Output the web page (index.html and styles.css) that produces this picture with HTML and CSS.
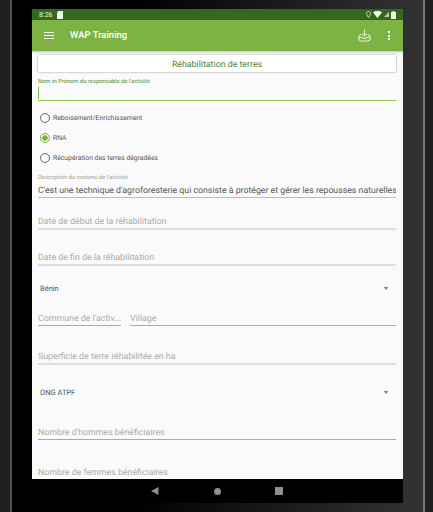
FILE: index.html
```html
<!DOCTYPE html>
<html lang="fr">
<head>
  <meta charset="UTF-8">
  <meta name="viewport" content="width=device-width, initial-scale=1.0">
  <title>WAP Training</title>
  <link rel="stylesheet" href="styles.css">
</head>
<body>
  <div class="tablet">
    <div class="screen">
      <div class="status-bar">
        <div class="status-left">
          <span class="clock">8:26</span>
          <svg class="sd-icon" width="6" height="8" viewBox="0 0 6 8"><path d="M1.500 0H6V8H0V1.500Z" fill="#f1f5ec"/></svg>
        </div>
        <div class="status-right">
          <svg class="pin-icon" width="5" height="7" viewBox="0 0 5 7"><path d="M2.500 .5C1.200 .5.5 1.400.5 2.500.5 3.800 2.500 6.500 2.500 6.500S4.500 3.800 4.500 2.500C4.500 1.400 3.800 .5 2.500 .5Z" fill="none" stroke="#dfe8d6" stroke-width=".9"/></svg>
          <svg width="9" height="7" viewBox="0 0 9 7"><path d="M0 1.200C2.600-.4 6.400-.4 9 1.200L4.500 7Z" fill="#fff"/></svg>
          <svg width="5" height="5" viewBox="0 0 5 5"><path d="M5 0V5H0Z" fill="#b9c9a9"/></svg>
          <svg class="battery-icon" width="5" height="8" viewBox="0 0 5 8"><path d="M1.500 0H3.500V1H5V8H0V1H1.500Z" fill="#f1f5ec"/></svg>
        </div>
      </div>
      <header class="app-bar">
        <div class="menu-icon"><span></span><span></span><span></span></div>
        <div class="app-title">WAP Training</div>
        <svg class="sync-icon" width="13" height="13" viewBox="0 0 14 14" fill="none" stroke="#e4f0d6" stroke-width="1.100">
          <path d="M7 .5V7M4.800 5 7 7.300 9.200 5"/>
          <path d="M3.500 5.500C1.500 6.500.7 8 .7 9.500.7 12 2 13 4 13H10C12 13 13.300 12 13.300 9.500 13.300 8 12.500 6.500 10.500 5.500"/>
          <path d="M1 9H4.500L5.500 10H8.500L9.500 9H13"/>
        </svg>
        <div class="more-icon"><span></span><span></span><span></span></div>
      </header>
      <main class="form">
        <div class="section-title">Réhabilitation de terres</div>

        <div class="field field-active">
          <label class="small-label label-green">Nom et Prénom du responsable de l'activité</label>
          <div class="input-line"><span class="caret"></span></div>
        </div>

        <div class="radio-group">
          <div class="radio-row"><span class="radio"></span>Reboisement/Enrichissement</div>
          <div class="radio-row"><span class="radio radio-on"></span>RNA</div>
          <div class="radio-row"><span class="radio"></span>Récupération des terres dégradées</div>
        </div>

        <div class="field field-desc">
          <label class="small-label">Description du contenu de l'activité</label>
          <div class="input-line value">C'est une technique d'agroforesterie qui consiste à protéger et gérer les repousses naturelles</div>
        </div>

        <div class="field field-date-start"><div class="input-line hint thick">Date de début de la réhabilitation</div></div>
        <div class="field field-date-end"><div class="input-line hint thick">Date de fin de la réhabilitation</div></div>

        <div class="select select-country"><span>Bénin</span><span class="arrow"></span></div>

        <div class="field-row">
          <div class="input-line hint dark-line commune">Commune de l'activ...</div>
          <div class="input-line hint dark-line village">Village</div>
        </div>

        <div class="field field-area"><div class="input-line hint thick">Superficie de terre réhabilitée en ha</div></div>

        <div class="select select-ong"><span>ONG ATPF</span><span class="arrow"></span></div>

        <div class="field field-men"><div class="input-line hint dark-line">Nombre d'hommes bénéficiaires</div></div>
        <div class="field field-women"><div class="input-line hint">Nombre de femmes bénéficiaires</div></div>
      </main>
      <nav class="nav-bar">
        <svg class="nav-back" width="8" height="8" viewBox="0 0 8 8"><path d="M7.500 0V8L0 4Z" fill="#8f8f8f"/></svg>
        <span class="nav-home"></span>
        <span class="nav-square"></span>
      </nav>
    </div>
  </div>
</body>
</html>
```

FILE: styles.css
```css
html, body {
  margin: 0;
  padding: 0;
}
body {
  width: 433px;
  height: 512px;
  overflow: hidden;
  background-color: #1f1f1f;
  font-family: Roboto, 'Liberation Sans', sans-serif;
  text-rendering: geometricPrecision;
}
.tablet {
  box-sizing: border-box;
  width: 415px;
  height: 512px;
  margin-left: 10px;
  padding: 9px 20px 0 20px;
  background: linear-gradient(to right, #000 0, #000 120px, #2c2c2c 370px, #333 100%);
  border-left: 2px solid #4a505a;
  border-right: 2px solid #77797c;
}
.screen {
  width: 371px;
  height: 494px;
  display: flex;
  flex-direction: column;
  background-color: #fafafa;
}

/* status bar */
.status-bar {
  height: 11px;
  flex: none;
  display: flex;
  justify-content: space-between;
  align-items: center;
  padding: 0 7px;
  background-color: #33691e;
}
.status-left, .status-right {
  display: flex;
  align-items: center;
}
.status-left {
  gap: 4px;
}
.status-right {
  gap: 2px;
}
.clock {
  font-size: 7px;
  color: #f1f5ec;
}

/* app bar */
.app-bar {
  height: 31px;
  flex: none;
  display: flex;
  align-items: center;
  background-color: #7cb342;
  box-shadow: 0 1px 2px rgba(0, 0, 0, 0.25);
  z-index: 1;
}
.menu-icon {
  width: 10px;
  margin-left: 12px;
  display: flex;
  flex-direction: column;
  gap: 2px;
}
.menu-icon span {
  height: 1px;
  background-color: #fff;
}
.app-title {
  margin-left: 16px;
  flex: 1;
  font-size: 9.500px;
  font-weight: 500;
  color: #fff;
}
.sync-icon {
  margin-right: 17px;
}
.more-icon {
  margin-right: 13px;
  display: flex;
  flex-direction: column;
  gap: 1.500px;
}
.more-icon span {
  width: 2px;
  height: 2px;
  background-color: #fff;
}

/* form */
.form {
  flex: 1;
  min-height: 0;
  overflow: hidden;
  padding: 4px 7px 0 6px;
}
.section-title {
  height: 17px;
  line-height: 20px;
  text-align: center;
  font-size: 8.800px;
  color: #4f7f3a;
  background-color: #fff;
  box-shadow: 0 0 2px rgba(0, 0, 0, 0.4);
}
.small-label {
  display: block;
  font-size: 5.800px;
  line-height: 7px;
  color: #9e9e9e;
}
.label-green {
  color: #558b2f;
}
.field-active {
  margin-top: 7px;
}
.field-active .input-line {
  height: 15px;
  border-bottom: 1px solid #8bc34a;
}
.caret {
  display: block;
  width: 1px;
  height: 12px;
  margin-top: 1px;
  background-color: #7cb342;
}
.input-line {
  box-sizing: border-box;
  font-size: 8.800px;
  white-space: nowrap;
  overflow: hidden;
  border-bottom: 1px solid #bdbdbd;
}
.value {
  height: 16px;
  padding-top: 3px;
  line-height: 12px;
  font-size: 8.760px;
  color: #555;
}
.hint {
  height: 14px;
  line-height: 14px;
  color: #aaa;
}
.thick {
  border-bottom: 2px solid #dedede;
  height: 15px;
}
.dark-line {
  border-bottom-color: #aaa;
}
.radio-group {
  margin-top: 7px;
}
.radio-row {
  height: 20px;
  display: flex;
  align-items: center;
  gap: 3px;
  padding-left: 2px;
  font-size: 6.800px;
  color: #555;
}
.radio {
  box-sizing: border-box;
  width: 10px;
  height: 10px;
  border: 1px solid #666;
  border-radius: 50%;
}
.radio-on {
  border-color: #7cb342;
  background: radial-gradient(circle, #7cb342 0, #7cb342 2.500px, transparent 3px);
}
.field-desc {
  margin-top: 7px;
}
.field-date-start {
  margin-top: 17px;
}
.field-date-end {
  margin-top: 21px;
}
.select {
  height: 14px;
  display: flex;
  justify-content: space-between;
  align-items: center;
  padding: 0 8px 0 2px;
  font-size: 7.500px;
  color: #555;
}
.select-country {
  margin-top: 15px;
}
.select-ong {
  margin-top: 20px;
}
.arrow {
  width: 0;
  height: 0;
  border-left: 2.500px solid transparent;
  border-right: 2.500px solid transparent;
  border-top: 3px solid #777;
}
.field-row {
  margin-top: 17px;
  display: flex;
  gap: 9px;
}
.commune {
  width: 83px;
  flex: none;
}
.village {
  flex: 1;
}
.field-area {
  margin-top: 24px;
}
.field-men {
  margin-top: 27px;
}
.field-women {
  margin-top: 26px;
}

/* android nav bar */
.nav-bar {
  height: 24px;
  flex: none;
  display: flex;
  align-items: center;
  padding-left: 119px;
  background-color: #000;
}
.nav-home {
  width: 7px;
  height: 7px;
  margin-left: 55px;
  border-radius: 50%;
  background-color: #8f8f8f;
}
.nav-square {
  width: 8px;
  height: 8px;
  margin-left: 54px;
  background-color: #8f8f8f;
}
```
